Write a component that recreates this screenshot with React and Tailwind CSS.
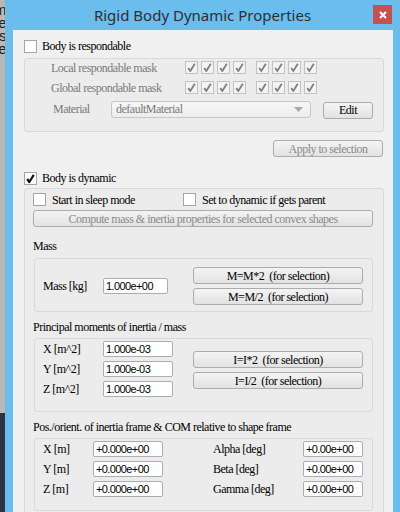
import React from 'react'

function Check({ checked, disabled }) {
  return (
    <div
      className={
        'w-[13px] h-[13px] shrink-0 border flex items-center justify-center ' +
        (disabled ? 'bg-[#f3f3f3] border-[#c2c2c2]' : 'bg-white border-[#a5a5a5]')
      }
    >
      {checked && (
        <svg width="11" height="11" viewBox="0 0 11 11">
          <path
            d="M2.2 6 L4.3 9 L8.8 1.8"
            fill="none"
            stroke={disabled ? '#7c7c7c' : '#111'}
            strokeWidth={disabled ? 1.7 : 2.2}
            strokeLinejoin="round"
          />
        </svg>
      )}
    </div>
  )
}

function Btn({ children, className = '', disabled }) {
  return (
    <div
      className={
        'h-[17px] shrink-0 flex items-center justify-center whitespace-pre border border-[#acacac] rounded-[3px] bg-gradient-to-b from-[#f4f4f4] to-[#e2e2e2] ' +
        (disabled ? 'text-[#8a8a8a] ' : 'text-black ') +
        className
      }
    >
      {children}
    </div>
  )
}

function Field({ value, className = '' }) {
  return (
    <div
      className={
        'h-[16px] shrink-0 bg-white border border-[#abadb3] rounded-[2px] pl-[2px] flex items-center font-["Liberation_Sans",sans-serif] text-[11px] tracking-[-0.6px] ' +
        className
      }
    >
      {value}
    </div>
  )
}

function MaskRow({ label }) {
  return (
    <div className="flex items-center h-[13px]">
      <div className="w-[134px] text-[#7a7a7a]">{label}</div>
      <div className="flex gap-[3px]">
        {[0, 1, 2, 3].map(i => <Check key={i} checked disabled />)}
      </div>
      <div className="flex gap-[3px] ml-[10px]">
        {[0, 1, 2, 3].map(i => <Check key={i} checked disabled />)}
      </div>
    </div>
  )
}

function Desktop() {
  return (
    <div className="w-[5px] shrink-0 flex flex-col">
      <div className="h-[413px] bg-[#b9b8b2] overflow-hidden pt-[3px] font-['Liberation_Sans',sans-serif] text-[15px] leading-[13px] text-[#1c1c1c]">
        {['m', 'e', 's', 'e'].map((c, i) => (
          <div key={i} className="h-[13px] flex justify-end overflow-hidden">
            <span className="mr-[-1px]">{c}</span>
          </div>
        ))}
      </div>
      <div className="flex-1 bg-[#2f3242]" />
    </div>
  )
}

export default function App() {
  return (
    <div className="w-[400px] h-[512px] overflow-hidden flex bg-[#6bbdee] font-['Liberation_Serif',serif] text-[12px] leading-[14px] tracking-[-0.5px] text-black">
      <Desktop />
      <div className="flex-1 flex flex-col min-w-0">
        <div className="relative h-[30px] shrink-0 flex items-center justify-center font-['Noto_Sans',sans-serif] text-[15px] tracking-normal text-[#2b2f36]">
          Rigid Body Dynamic Properties
          <div className="absolute right-[8px] top-[5px] w-[19px] h-[19px] bg-[#c75050] flex items-center justify-center">
            <svg width="8" height="8" viewBox="0 0 8 8">
              <path d="M1 1 L7 7 M7 1 L1 7" stroke="#fff" strokeWidth="2" />
            </svg>
          </div>
        </div>

        <div className="flex-1 ml-[8px] mr-[7px] bg-[#f0f0f0] pl-[11px] pr-[9px] pt-[9px]">
          <div className="flex items-center h-[14px]">
            <Check />
            <span className="ml-[5px]">Body is respondable</span>
          </div>

          <div className="mt-[5px] h-[74px] border border-[#d9d9d9] rounded-[3px] bg-[#ececec] pl-[26px] pt-[2px]">
            <MaskRow label="Local respondable mask" />
            <div className="mt-[7px]">
              <MaskRow label="Global respondable mask" />
            </div>
            <div className="mt-[6px] flex items-center h-[18px]">
              <div className="w-[60px] pl-[2px] text-[#7a7a7a]">Material</div>
              <div className="w-[200px] h-[17px] border border-[#c6c6c6] rounded-[3px] bg-gradient-to-b from-[#f7f7f7] to-[#ededed] flex items-center pl-[4px] text-[#7a7a7a]">
                <span className="flex-1">defaultMaterial</span>
                <svg width="9" height="5" viewBox="0 0 9 5" className="mr-[7px]">
                  <path d="M0 0 L9 0 L4.5 5 Z" fill="#a8a8a8" />
                </svg>
              </div>
              <Btn className="ml-[12px] w-[50px] mt-[2px] text-[#444]">Edit</Btn>
            </div>
          </div>

          <div className="flex justify-end mt-[8px] mr-[1px]">
            <Btn disabled className="w-[110px]">Apply to selection</Btn>
          </div>

          <div className="mt-[14px] flex items-center h-[14px]">
            <Check checked />
            <span className="ml-[5px]">Body is dynamic</span>
          </div>

          <div className="mt-[3px] border border-[#d9d9d9] rounded-[3px] bg-[#ececec] pl-[8px] pr-[10px] pt-[4px] pb-[20px]">
            <div className="flex items-center h-[13px]">
              <div className="w-[150px] flex items-center">
                <Check />
                <span className="ml-[6px]">Start in sleep mode</span>
              </div>
              <Check />
              <span className="ml-[6px]">Set to dynamic if gets parent</span>
            </div>

            <Btn disabled className="mt-[4px] w-full">Compute mass &amp; inertia properties for selected convex shapes</Btn>

            <div className="mt-[13px] h-[12px] leading-[12px]">Mass</div>
            <div className="mt-[6px] ml-[1px] h-[54px] border border-[#d9d9d9] rounded-[3px] bg-[#ececec] pl-[8px] pt-[2px] flex items-center">
              <div className="w-[60px]">Mass [kg]</div>
              <Field value="1.000e+00" className="w-[65px]" />
              <div className="ml-[25px] w-[170px] flex flex-col gap-[4px]">
                <Btn className="h-[16px]">M=M*2  (for selection)</Btn>
                <Btn className="h-[16px]">M=M/2  (for selection)</Btn>
              </div>
            </div>

            <div className="mt-[9px] h-[12px] leading-[12px]">Principal moments of inertia / mass</div>
            <div className="mt-[5px] ml-[1px] h-[74px] border border-[#d9d9d9] rounded-[3px] bg-[#ececec] pl-[8px] pt-[2px] flex items-start">
              <div className="flex flex-col gap-[4px]">
                {['X [m^2]', 'Y [m^2]', 'Z [m^2]'].map(l => (
                  <div key={l} className="flex items-center h-[16px]">
                    <div className="w-[60px]">{l}</div>
                    <Field value="1.000e-03" className="w-[70px]" />
                  </div>
                ))}
              </div>
              <div className="ml-[20px] mt-[10px] w-[170px] flex flex-col gap-[4px]">
                <Btn className="h-[16px]">I=I*2  (for selection)</Btn>
                <Btn className="h-[16px]">I=I/2  (for selection)</Btn>
              </div>
            </div>

            <div className="mt-[9px] h-[12px] leading-[12px]">Pos./orient. of inertia frame &amp; COM relative to shape frame</div>
            <div className="mt-[5px] ml-[1px] h-[73px] border border-[#d9d9d9] rounded-[3px] bg-[#ececec] pl-[8px] pt-[2px] flex flex-col gap-[4px]">
              {[
                ['X [m]', 'Alpha [deg]'],
                ['Y [m]', 'Beta [deg]'],
                ['Z [m]', 'Gamma [deg]'],
              ].map(([a, b]) => (
                <div key={a} className="flex items-center h-[16px]">
                  <div className="w-[50px]">{a}</div>
                  <Field value="+0.000e+00" className="w-[70px]" />
                  <div className="ml-[50px] w-[90px]">{b}</div>
                  <Field value="+0.00e+00" className="w-[60px]" />
                </div>
              ))}
            </div>
          </div>
        </div>
      </div>
    </div>
  )
}
